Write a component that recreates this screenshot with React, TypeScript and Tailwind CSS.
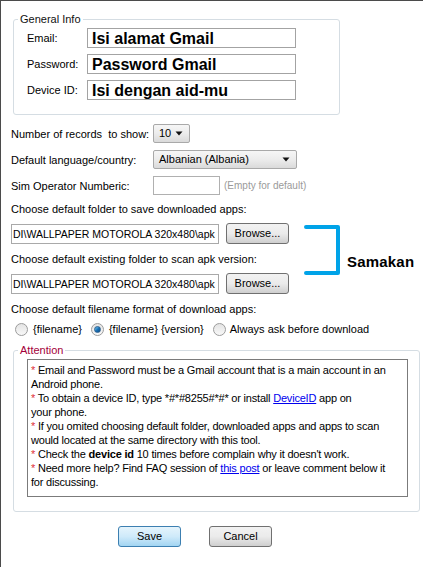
import React from 'react';

const Arrow = () => (
  <svg width="8" height="5" viewBox="0 0 8 5" className="shrink-0">
    <path d="M0.5 0.5 H7.5 L4 4.5 Z" fill="#111" />
  </svg>
);

function Select({ value, width }: { value: string; width: string }) {
  return (
    <div
      className={`${width} h-[19px] flex items-center justify-between pl-[5px] pr-[6px] border border-[#a9a9a9] rounded-[2px] bg-gradient-to-b from-[#f6f6f6] via-[#ececec] to-[#dadada]`}
    >
      <span className="leading-none">{value}</span>
      <Arrow />
    </div>
  );
}

function Radio({ checked }: { checked?: boolean }) {
  return (
    <span className="w-[13px] h-[13px] rounded-full border border-[#9c9c9c] bg-gradient-to-b from-[#e4e4e4] to-[#f8f8f8] flex items-center justify-center shrink-0">
      {checked && (
        <span className="w-[7px] h-[7px] rounded-full bg-gradient-to-br from-[#7ad0f7] via-[#1a73b8] to-[#0b4a86] border border-[#2b5f8f]" />
      )}
    </span>
  );
}

function WinButton({ label, primary }: { label: string; primary?: boolean }) {
  return (
    <button
      className={
        primary
          ? 'w-[63px] h-[21px] rounded-[3px] border border-[#3c7fb1] bg-gradient-to-b from-[#e5f4fc] via-[#cfeafa] to-[#a2d5f2] text-[11px] leading-none'
          : 'w-[63px] h-[21px] rounded-[3px] border border-[#707070] bg-gradient-to-b from-[#f2f2f2] via-[#ebebeb] to-[#cfcfcf] text-[11px] leading-none'
      }
    >
      {label}
    </button>
  );
}

const Star = () => <span className="text-[#e0303a]">*</span>;

function PathBox() {
  return (
    <div className="w-[208px] h-[20px] border border-[#a9a9a9] flex items-center pl-[1px] whitespace-nowrap overflow-hidden text-[10.5px]">
      DI\WALLPAPER MOTOROLA 320x480\apk
    </div>
  );
}

export default function App() {
  const infoRows = [
    { label: 'Email:', value: 'Isi alamat Gmail' },
    { label: 'Password:', value: 'Password Gmail' },
    { label: 'Device ID:', value: 'Isi dengan aid-mu' },
  ];

  return (
    <div className="w-[423px] h-[567px] overflow-hidden bg-white border-l border-t border-[#4b4b4b] pl-[9px] font-['Liberation_Sans',Arial,sans-serif] text-[11px] leading-[14px] text-black">
      {/* General Info */}
      <fieldset className="mt-[11px] ml-[3px] w-[327px] border border-[#d5dde3] rounded-[3px] pl-[13px] pb-[14px]">
        <legend className="ml-[-9px] px-[2px] leading-[14px] text-[11px] text-[#111]">General Info</legend>
        <div className="flex flex-col gap-[6px] pt-[2px]">
          {infoRows.map((r) => (
            <div key={r.label} className="flex items-center">
              <span className="w-[60px] shrink-0">{r.label}</span>
              <div className="w-[209px] h-[20px] border border-[#a3a3a3] flex items-center pl-[4px] pt-[2px] font-bold text-[16px] leading-none">
                {r.value}
              </div>
            </div>
          ))}
        </div>
      </fieldset>

      {/* options */}
      <div className="flex flex-col pl-[1px] pt-[9px]">
        <div className="flex items-center h-[19px]">
          <span className="w-[142px] whitespace-pre">Number of records  to show:</span>
          <Select value="10" width="w-[37px]" />
        </div>
        <div className="flex items-center h-[19px] mt-[7px]">
          <span className="w-[142px]">Default language/country:</span>
          <Select value="Albanian (Albania)" width="w-[144px]" />
        </div>
        <div className="flex items-center h-[19px] mt-[7px]">
          <span className="w-[142px]">Sim Operator Numberic:</span>
          <div className="w-[67px] h-[19px] border border-[#b0b0b0]" />
          <span className="ml-[4px] text-[#9a9a9a] text-[10px]">(Empty for default)</span>
        </div>
        <div className="mt-[7px]">Choose default folder to save downloaded apps:</div>

        <div className="flex">
          <div className="flex flex-col w-[287px]">
            <div className="flex items-center gap-[7px] mt-[7px]">
              <PathBox />
              <WinButton label="Browse..." />
            </div>
            <div className="mt-[8px]">Choose default existing folder to scan apk version:</div>
            <div className="flex items-center gap-[7px] mt-[7px]">
              <PathBox />
              <WinButton label="Browse..." />
            </div>
          </div>
          <svg width="38" height="53" viewBox="0 0 38 53" className="ml-[6px] mt-[8px] shrink-0">
            <path
              d="M2 3 H34 V49 H2"
              fill="none"
              stroke="#00a3e8"
              strokeWidth="4"
              strokeLinecap="round"
              strokeLinejoin="round"
            />
          </svg>
          <span className="ml-[5px] self-center mt-[12px] font-bold text-[15px] leading-none tracking-[0.2px]">
            Samakan
          </span>
        </div>

        <div className="mt-[8px]">Choose default filename format of download apps:</div>
        <div className="flex items-center mt-[6px] h-[14px] pl-[4px]">
          <Radio />
          <span className="ml-[5px]">{'{filename}'}</span>
          <span className="ml-[9px]">
            <Radio checked />
          </span>
          <span className="ml-[5px]">{'{filename} {version}'}</span>
          <span className="ml-[9px]">
            <Radio />
          </span>
          <span className="ml-[4px]">Always ask before download</span>
        </div>
      </div>

      {/* Attention */}
      <fieldset className="mt-[7px] ml-[3px] w-[407px] border border-[#d5dde3] rounded-[3px] pl-[13px] pb-[14px]">
        <legend className="ml-[-9px] px-[2px] leading-[14px] text-[11px] text-[#a3003a]">Attention</legend>
        <div className="mt-[2px] w-[381px] h-[138px] border border-[#7b7b7b] pl-[3px] pt-[3px] leading-[14px] text-[11px] tracking-[-0.2px] whitespace-nowrap overflow-hidden">
          <Star /> Email and Password must be a Gmail account that is a main account in an
          <br />
          Android phone.
          <br />
          <Star /> To obtain a device ID, type *#*#8255#*#* or install{' '}
          <a className="text-[#0000ee] underline">DeviceID</a> app on
          <br />
          your phone.
          <br />
          <Star /> If you omited choosing default folder, downloaded apps and apps to scan
          <br />
          would located at the same directory with this tool.
          <br />
          <Star /> Check the <b>device id</b> 10 times before complain why it doesn't work.
          <br />
          <Star /> Need more help? Find FAQ session of{' '}
          <a className="text-[#0000ee] underline">this post</a> or leave comment below it
          <br />
          for discussing.
        </div>
      </fieldset>

      <div className="flex mt-[14px] ml-[108px] gap-[28px]">
        <WinButton label="Save" primary />
        <WinButton label="Cancel" />
      </div>
    </div>
  );
}
